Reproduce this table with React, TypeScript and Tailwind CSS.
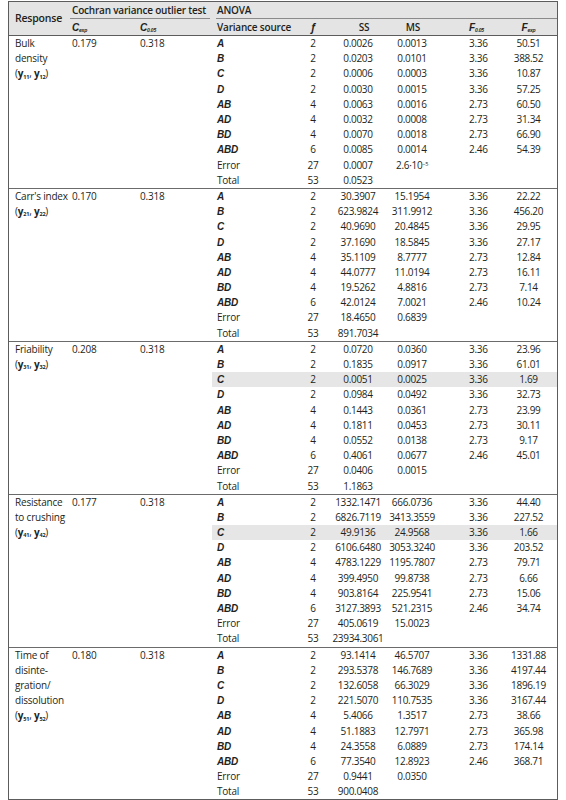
import React from 'react';

type Row = [string, string, string, string, string?, string?];

interface Section {
  lines: React.ReactNode[];
  cexp: string;
  c05: string;
  rows: Row[];
  highlight?: number;
}

const ital = 'font-bold italic font-["Liberation_Sans",sans-serif]';

const Y = ({ a, b }: { a: string; b: string }) => (
  <span>
    (<b>y</b>
    <sub className="text-[5.5px] font-bold">{a}</sub>, <b>y</b>
    <sub className="text-[5.5px] font-bold">{b}</sub>)
  </span>
);

const sections: Section[] = [
  {
    lines: ['Bulk', 'density', <Y a="11" b="12" />],
    cexp: '0.179',
    c05: '0.318',
    rows: [
      ['A', '2', '0.0026', '0.0013', '3.36', '50.51'],
      ['B', '2', '0.0203', '0.0101', '3.36', '388.52'],
      ['C', '2', '0.0006', '0.0003', '3.36', '10.87'],
      ['D', '2', '0.0030', '0.0015', '3.36', '57.25'],
      ['AB', '4', '0.0063', '0.0016', '2.73', '60.50'],
      ['AD', '4', '0.0032', '0.0008', '2.73', '31.34'],
      ['BD', '4', '0.0070', '0.0018', '2.73', '66.90'],
      ['ABD', '6', '0.0085', '0.0014', '2.46', '54.39'],
      ['Error', '27', '0.0007', 'exp'],
      ['Total', '53', '0.0523', ''],
    ],
  },
  {
    lines: ["Carr's index", <Y a="21" b="22" />],
    cexp: '0.170',
    c05: '0.318',
    rows: [
      ['A', '2', '30.3907', '15.1954', '3.36', '22.22'],
      ['B', '2', '623.9824', '311.9912', '3.36', '456.20'],
      ['C', '2', '40.9690', '20.4845', '3.36', '29.95'],
      ['D', '2', '37.1690', '18.5845', '3.36', '27.17'],
      ['AB', '4', '35.1109', '8.7777', '2.73', '12.84'],
      ['AD', '4', '44.0777', '11.0194', '2.73', '16.11'],
      ['BD', '4', '19.5262', '4.8816', '2.73', '7.14'],
      ['ABD', '6', '42.0124', '7.0021', '2.46', '10.24'],
      ['Error', '27', '18.4650', '0.6839'],
      ['Total', '53', '891.7034', ''],
    ],
  },
  {
    lines: ['Friability', <Y a="31" b="32" />],
    cexp: '0.208',
    c05: '0.318',
    highlight: 2,
    rows: [
      ['A', '2', '0.0720', '0.0360', '3.36', '23.96'],
      ['B', '2', '0.1835', '0.0917', '3.36', '61.01'],
      ['C', '2', '0.0051', '0.0025', '3.36', '1.69'],
      ['D', '2', '0.0984', '0.0492', '3.36', '32.73'],
      ['AB', '4', '0.1443', '0.0361', '2.73', '23.99'],
      ['AD', '4', '0.1811', '0.0453', '2.73', '30.11'],
      ['BD', '4', '0.0552', '0.0138', '2.73', '9.17'],
      ['ABD', '6', '0.4061', '0.0677', '2.46', '45.01'],
      ['Error', '27', '0.0406', '0.0015'],
      ['Total', '53', '1.1863', ''],
    ],
  },
  {
    lines: ['Resistance', 'to crushing', <Y a="41" b="42" />],
    cexp: '0.177',
    c05: '0.318',
    highlight: 2,
    rows: [
      ['A', '2', '1332.1471', '666.0736', '3.36', '44.40'],
      ['B', '2', '6826.7119', '3413.3559', '3.36', '227.52'],
      ['C', '2', '49.9136', '24.9568', '3.36', '1.66'],
      ['D', '2', '6106.6480', '3053.3240', '3.36', '203.52'],
      ['AB', '4', '4783.1229', '1195.7807', '2.73', '79.71'],
      ['AD', '4', '399.4950', '99.8738', '2.73', '6.66'],
      ['BD', '4', '903.8164', '225.9541', '2.73', '15.06'],
      ['ABD', '6', '3127.3893', '521.2315', '2.46', '34.74'],
      ['Error', '27', '405.0619', '15.0023'],
      ['Total', '53', '23934.3061', ''],
    ],
  },
  {
    lines: ['Time of', 'disinte-', 'gration/', 'dissolution', <Y a="51" b="52" />],
    cexp: '0.180',
    c05: '0.318',
    rows: [
      ['A', '2', '93.1414', '46.5707', '3.36', '1331.88'],
      ['B', '2', '293.5378', '146.7689', '3.36', '4197.44'],
      ['C', '2', '132.6058', '66.3029', '3.36', '1896.19'],
      ['D', '2', '221.5070', '110.7535', '3.36', '3167.44'],
      ['AB', '4', '5.4066', '1.3517', '2.73', '38.66'],
      ['AD', '4', '51.1883', '12.7971', '2.73', '365.98'],
      ['BD', '4', '24.3558', '6.0889', '2.73', '174.14'],
      ['ABD', '6', '77.3540', '12.8923', '2.46', '368.71'],
      ['Error', '27', '0.9441', '0.0350'],
      ['Total', '53', '900.0408', ''],
    ],
  },
];

const rowCols = 'grid grid-cols-[78px_46px_44px_64px_56px_57px] h-[15.2px] items-center';

function Cell({ children }: { children?: React.ReactNode }) {
  return <div className="flex justify-center whitespace-nowrap tracking-[-0.3px]">{children}</div>;
}

function DataRow({ row, shaded }: { row: Row; shaded: boolean }) {
  const [src, f, ss, ms, f05, fexp] = row;
  const plain = src === 'Error' || src === 'Total';
  return (
    <div className={`${rowCols} ${shaded ? 'bg-[#e6e6e6]' : ''}`}>
      <div className={`pl-[5px] ${plain ? '' : ital}`}>{src}</div>
      <Cell>{f}</Cell>
      <Cell>{ss}</Cell>
      <Cell>
        {ms === 'exp' ? (
          <span>
            2.6·10<sup className="text-[5.5px]">−5</sup>
          </span>
        ) : (
          ms
        )}
      </Cell>
      <div className="pl-[25px] tracking-[-0.3px]">{f05}</div>
      <Cell>{fexp}</Cell>
    </div>
  );
}

function SectionBlock({ s, last }: { s: Section; last: boolean }) {
  return (
    <div className={`flex ${last ? '' : 'border-b border-[#6b6b6b]'}`}>
      <div className="w-[59px] pl-[6px] leading-[15.2px] whitespace-nowrap">
        {s.lines.map((l, i) => (
          <div key={i}>{l}</div>
        ))}
      </div>
      <div className="w-[68px] pl-[4px] leading-[15.2px]">{s.cexp}</div>
      <div className="w-[76px] pl-[4px] leading-[15.2px]">{s.c05}</div>
      <div className="w-[345px]">
        {s.rows.map((r, i) => (
          <DataRow key={i} row={r} shaded={s.highlight === i} />
        ))}
      </div>
    </div>
  );
}

function Sub({ base, sub }: { base: string; sub: string }) {
  return (
    <span className={ital}>
      {base}
      <sub className="text-[5px] italic">{sub}</sub>
    </span>
  );
}

export default function App() {
  return (
    <div
      className="bg-white w-[566px] h-[800px] pt-[1px] text-[10px] tracking-[-0.2px] text-[#231f20]"
      style={{ fontFamily: '"Open Sans", "Liberation Sans", sans-serif' }}
    >
      <div className="ml-[8px] w-[550px] border border-[#5c5c5c]">
        {/* header */}
        <div className="grid grid-cols-[59px_68px_76px_78px_46px_44px_64px_56px_57px] grid-rows-[17px_16px] bg-[#e4e4e4] border-b border-[#5c5c5c] font-semibold">
          <div className="row-span-2 flex items-center pl-[6px] text-[10.5px]">Response</div>
          <div className="col-span-2 flex items-center">
            <div className="mx-[2px] w-full h-full flex items-center pl-[2px] border-b border-[#8a8a8a] whitespace-nowrap">
              Cochran variance outlier test
            </div>
          </div>
          <div className="col-span-6 flex items-center">
            <div className="ml-[4px] w-full h-full flex items-center pl-[1px] border-b border-[#8a8a8a]">
              ANOVA
            </div>
          </div>
          <div className="flex items-center pl-[4px]">
            <Sub base="C" sub="exp" />
          </div>
          <div className="flex items-center pl-[4px]">
            <Sub base="C" sub="0.05" />
          </div>
          <div className="flex items-center pl-[5px] whitespace-nowrap">Variance source</div>
          <div className="flex items-center justify-center font-bold italic">f</div>
          <div className="flex items-center justify-center pl-[12px]">SS</div>
          <div className="flex items-center justify-center pl-[2px]">MS</div>
          <div className="flex items-center pl-[25px]">
            <Sub base="F" sub="0.05" />
          </div>
          <div className="flex items-center justify-center">
            <Sub base="F" sub="exp" />
          </div>
        </div>
        {sections.map((s, i) => (
          <SectionBlock key={i} s={s} last={i === sections.length - 1} />
        ))}
      </div>
    </div>
  );
}
